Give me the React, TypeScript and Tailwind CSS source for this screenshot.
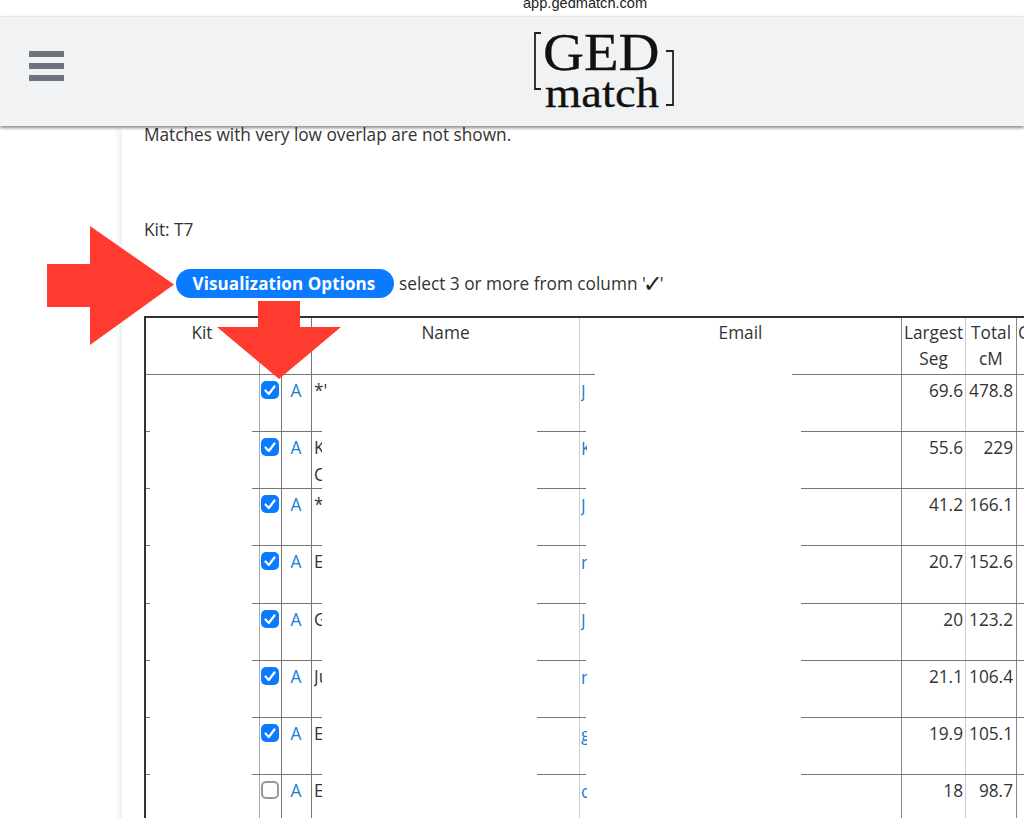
const rows = [
  { n: ["*'"], e: "J", s: "69.6", t: "478.8", checked: true },
  { n: ["K", "C"], e: "K", s: "55.6", t: "229", checked: true },
  { n: ["*"], e: "J", s: "41.2", t: "166.1", checked: true },
  { n: ["E"], e: "m", s: "20.7", t: "152.6", checked: true },
  { n: ["G"], e: "J", s: "20", t: "123.2", checked: true },
  { n: ["Ju"], e: "m", s: "21.1", t: "106.4", checked: true },
  { n: ["E"], e: "g", s: "19.9", t: "105.1", checked: true },
  { n: ["E"], e: "c", s: "18", t: "98.7", checked: false },
];

const gridCols = "grid grid-cols-[113px_22px_30px_268px_322px_64px_51px_60px]";

function Check({ checked }: { checked: boolean }) {
  if (checked) {
    return (
      <svg width="18" height="18" viewBox="0 0 18 18" className="block">
        <rect width="18" height="18" rx="5" fill="#0a7bff" />
        <path d="M4.5 9.5 L7.8 13 L13.5 5.5" fill="none" stroke="#fff" strokeWidth="2.2" strokeLinecap="round" strokeLinejoin="round" />
      </svg>
    );
  }
  return <div className="h-[18px] w-[18px] rounded-[5px] border-2 border-[#999] bg-white" />;
}

function Row({ row, index }: { row: (typeof rows)[number]; index: number }) {
  const first = index === 0;
  return (
    <div className={`${gridCols} relative h-[57.14px] border-t border-[#777] leading-[27px]`}>
      <div />
      <div className="flex justify-start border-l border-[#aaa] pt-[6px] pl-px">
        <Check checked={row.checked} />
      </div>
      <div className="border-l border-[#777] pt-[2px] pr-[1px] text-center text-[#1a7fd6]">A</div>
      <div className="border-l border-[#777] pt-[2px] pl-[2px]">
        {row.n.map((l, i) => (
          <div key={i} className={`${first ? "w-[13px]" : "w-[8px]"} overflow-hidden whitespace-nowrap`}>{l}</div>
        ))}
      </div>
      <div className="border-l border-[#ccc] pt-[3px] pl-[1px] text-[#1a7fd6]">
        <div className="w-[6px] overflow-hidden">{row.e}</div>
      </div>
      <div className="border-l border-[#888] pt-[2px] pr-[2px] text-right">{row.s}</div>
      <div className="border-l border-[#ccc] pt-[2px] pr-[3px] text-right">{row.t}</div>
      <div className="border-l border-[#888]" />
      {!first && <div className="absolute -top-px left-[4px] h-px w-[102px] bg-white" />}
      {!first && <div className="absolute -top-px left-[176px] h-px w-[215px] bg-white" />}
      <div className={`absolute -top-px h-px bg-white ${first ? "left-[449px] w-[197px]" : "left-[440px] w-[215px]"}`} />
    </div>
  );
}

export default function App() {
  return (
    <div className="relative h-[818px] w-[1024px] overflow-hidden bg-white font-['Open_Sans',sans-serif] text-[17.25px] text-[#333]">
      <div className="h-[16px] overflow-hidden bg-white pl-[523px] font-['Liberation_Sans',sans-serif] text-[14.6px] leading-[7px] text-[#222]">
        app.gedmatch.com
      </div>

      <header className="relative z-10 flex h-[110px] items-start border-t border-[#e6e6e6] bg-[#f1f2f4] pl-[29px] shadow-[0_2px_3px_rgba(0,0,0,0.45)]">
        <div className="mt-[34px] flex w-[35px] flex-col gap-[6px]">
          <div className="h-[6px] bg-[#6c757d]" />
          <div className="h-[6px] bg-[#6c757d]" />
          <div className="h-[6px] bg-[#6c757d]" />
        </div>
        <div className="relative ml-[470px] h-[109px] w-[140px] font-['Liberation_Serif',serif] text-[#111] [-webkit-text-stroke:0.3px_#111]">
          <svg width="140" height="109" className="absolute top-0 left-0" fill="none" stroke="#222" strokeWidth="1.8">
            <path d="M7 16 H1 V72 H7" />
            <path d="M132 34 H139 V88 H132" />
          </svg>
          <div className="absolute top-[4px] left-[9px] origin-left scale-x-[1.07] text-[53px] leading-[62px]">GED</div>
          <div className="absolute top-[50px] left-[11px] origin-left scale-x-[1.085] text-[43px] leading-[52px]">match</div>
        </div>
      </header>

      <main className="ml-[122px] h-[720px] pl-[22px] shadow-[-6px_0_6px_-3px_rgba(0,0,0,0.07)]">
        <p className="leading-[18px]">Matches with very low overlap are not shown.</p>
        <p className="mt-[77px] leading-[18px]">Kit: T7</p>
        <div className="mt-[30px] ml-[32px] flex items-center gap-[5px]">
          <button className="h-[29px] w-[218px] rounded-full bg-[#0a7bff] pr-[2px] text-center text-[17px] font-bold tracking-[0.1px] text-white">
            Visualization Options
          </button>
          <span className="pt-[1px] leading-[24px]">
            select 3 or more from column '<span className="mx-[-3px] align-[-2px] font-['DejaVu_Sans',sans-serif] text-[24px] leading-[0] font-bold text-[#222]">✓</span>'
          </span>
        </div>
        <div className="mt-[18px] w-[900px] border-t-2 border-l-2 border-[#333]">
          <div className={`${gridCols} h-[56px] leading-[26px]`}>
            <div className="pt-[2px] pr-[1px] text-center">Kit</div>
            <div className="border-l border-[#aaa]" />
            <div className="border-l border-[#777]" />
            <div className="border-l border-[#777] pt-[2px] text-center">Name</div>
            <div className="border-l border-[#ccc] pt-[2px] text-center">Email</div>
            <div className="border-l border-[#888] pt-[2px] text-center">Largest<br />Seg</div>
            <div className="border-l border-[#ccc] pt-[2px] text-center">Total<br />cM</div>
            <div className="overflow-hidden border-l border-[#888] pt-[2px] pl-[1px]">C</div>
          </div>
          {rows.map((r, i) => (
            <Row key={i} row={r} index={i} />
          ))}
        </div>
      </main>

      <svg width="360" height="170" className="absolute top-[220px] left-0 z-20" fill="#ff3b30">
        <polygon points="47,44 90,44 90,6 174,64.5 90,125 90,87 47,87" />
        <polygon points="258,81 300,81 300,107 341,107 279,159 217,107 258,107" />
      </svg>
    </div>
  );
}
